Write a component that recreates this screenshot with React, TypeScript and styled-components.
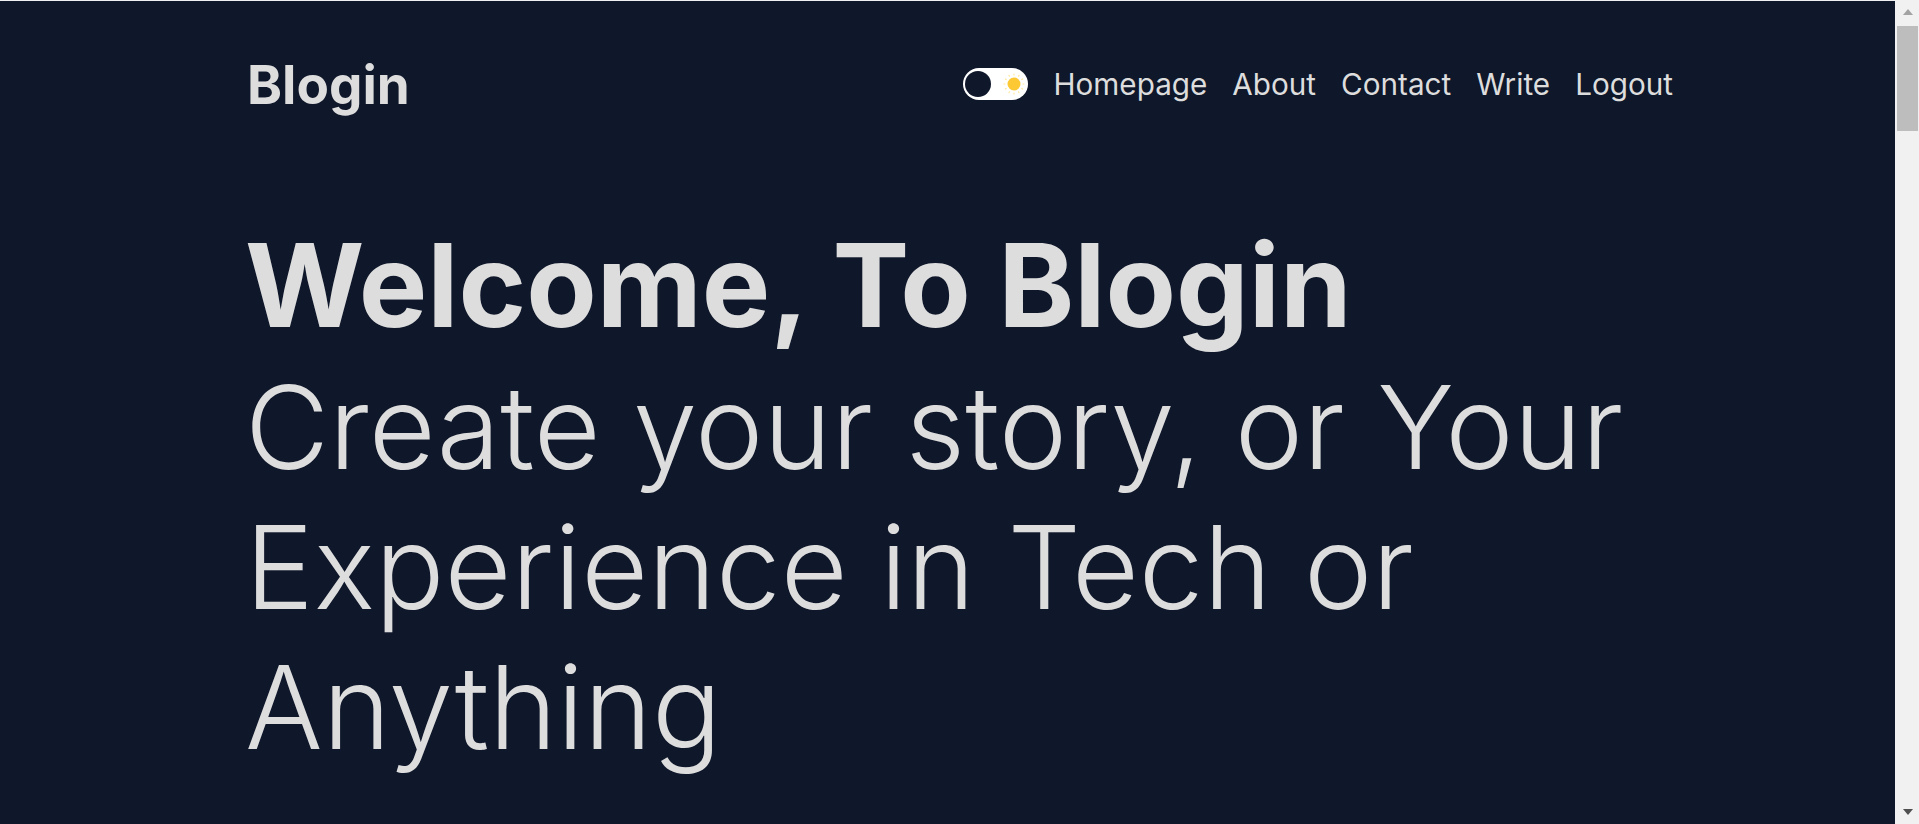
import React from "react";
import styled, { createGlobalStyle } from "styled-components";

const GlobalStyle = createGlobalStyle`
  html, body {
    margin: 0;
    padding: 0;
    background: #f0f0f0;
  }
  body {
    font-family: Inter, "Noto Sans", "Liberation Sans", sans-serif;
  }
  * { box-sizing: border-box; }
`;

const Page = styled.div`
  margin-top: 1px;
  min-height: 6199px;
  background: #0f172a;
  color: #dddddd;
`;

const Container = styled.div`
  padding: 0 246px 0 245px;
`;

const Header = styled.header`
  display: flex;
  align-items: center;
  justify-content: space-between;
  padding-top: 52px;
`;

const Logo = styled.a`
  padding-left: 2px;
  font-size: 53px;
  font-weight: 700;
  line-height: normal;
  color: #dddddd;
  text-decoration: none;
`;

const Nav = styled.nav`
  display: flex;
  align-items: center;
  gap: 25px;
  margin-bottom: 2px;
`;

const NavLink = styled.a`
  font-size: 29.7px;
  font-weight: 400;
  line-height: normal;
  color: #dddddd;
  text-decoration: none;
  cursor: pointer;
`;

const Toggle = styled.button`
  display: flex;
  align-items: center;
  justify-content: space-between;
  width: 65px;
  height: 32px;
  padding: 0 3px 0 2px;
  border: none;
  border-radius: 16px;
  background: #ffffff;
  cursor: pointer;
`;

const Knob = styled.span`
  width: 26px;
  height: 26px;
  border-radius: 50%;
  background: #0f172a;
`;

const Hero = styled.section`
  padding-top: 98px;
`;

const Title = styled.h1`
  margin: 0;
  font-size: 115.1px;
  font-weight: 700;
  line-height: normal;
`;

const Subtitle = styled.p`
  margin: 2px 0 0;
  font-size: 115.5px;
  font-weight: 300;
  line-height: normal;
`;

/* Decorative window scrollbar, drawn over the page as in the reference */
const ScrollRail = styled.div`
  position: fixed;
  top: 0;
  right: 0;
  bottom: 0;
  width: 24px;
  display: flex;
  flex-direction: column;
  align-items: stretch;
  background: #f1f1f1;
`;

const ArrowCell = styled.div`
  height: 24px;
  display: flex;
  align-items: center;
  justify-content: center;
  padding-left: 2px;
`;

const Arrow = styled.span<{ $dir: "up" | "down" }>`
  width: 0;
  height: 0;
  border-left: 5.5px solid transparent;
  border-right: 5.5px solid transparent;
  ${(p) =>
    p.$dir === "up"
      ? "border-bottom: 6px solid #a3a3a3;"
      : "border-top: 6px solid #505050;"}
`;

const Track = styled.div`
  flex: 1;
  padding: 2px 1px 0 2px;
`;

const Thumb = styled.div`
  height: 105px;
  background: #bdbdbd;
`;

const Sun = () => (
  <svg width="22" height="22" viewBox="0 0 22 22" aria-hidden="true">
    <g stroke="#fde68a" strokeWidth="1.2" strokeLinecap="round" opacity="0.85">
      {Array.from({ length: 12 }).map((_, i) => {
        const a = (i * Math.PI) / 6;
        const x1 = 11 + Math.cos(a) * 9;
        const y1 = 11 + Math.sin(a) * 9;
        const x2 = 11 + Math.cos(a) * 10;
        const y2 = 11 + Math.sin(a) * 10;
        return <line key={i} x1={x1} y1={y1} x2={x2} y2={y2} />;
      })}
    </g>
    <circle cx="11" cy="11" r="6.5" fill="#fcc934" />
  </svg>
);

export default function App() {
  return (
    <>
      <GlobalStyle />
      <Page>
        <Container>
          <Header>
            <Logo href="#">Blogin</Logo>
            <Nav>
              <Toggle aria-label="Toggle theme">
                <Knob />
                <Sun />
              </Toggle>
              <NavLink>Homepage</NavLink>
              <NavLink>About</NavLink>
              <NavLink>Contact</NavLink>
              <NavLink>Write</NavLink>
              <NavLink>Logout</NavLink>
            </Nav>
          </Header>
          <Hero>
            <Title>Welcome, To Blogin</Title>
            <Subtitle>Create your story, or Your Experience in Tech or Anything</Subtitle>
          </Hero>
        </Container>
      </Page>
      <ScrollRail aria-hidden="true">
        <ArrowCell>
          <Arrow $dir="up" />
        </ArrowCell>
        <Track>
          <Thumb />
        </Track>
        <ArrowCell>
          <Arrow $dir="down" />
        </ArrowCell>
      </ScrollRail>
    </>
  );
}
